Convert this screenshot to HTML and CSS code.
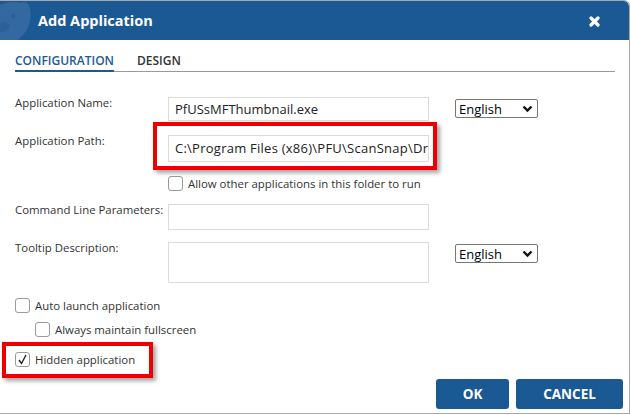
FILE: index.html
```html
<!DOCTYPE html>
<html lang="en">
<head>
    <meta charset="UTF-8">
    <title>Add Application</title>
    <link rel="stylesheet" href="styles.css">
</head>
<body>

    <div class="dialog">
        <!-- Title bar -->
        <div class="titlebar">
            <svg class="bear" width="34" height="39" viewBox="0 0 34 39">
                <path d="M0 4 C6 1 14 0 20 2 C24 0 28 1 29 5 C31 9 31 14 30 19 C29 26 26 31 22 35 L18 39 L0 39 Z" fill="#3369a0"/>
                <path d="M0 22 C3 20 7 21 9 24 C10 27 8 30 4 31 L0 31 Z" fill="#2a6199"/>
                <circle cx="13" cy="15" r="1.6" fill="#245d96"/>
            </svg>
            <div class="title">Add Application</div>
            <svg class="close" width="11" height="11" viewBox="0 0 11 11">
                <path d="M2 2 L9 9 M9 2 L2 9" stroke="#fff" stroke-width="3.2" stroke-linecap="round"/>
            </svg>
        </div>

        <!-- Tabs -->
        <div class="tabs">
            <div class="tab active">CONFIGURATION</div>
            <div class="tab">DESIGN</div>
        </div>

        <!-- Form -->
        <div class="form">
            <div class="row row-name">
                <div class="label">Application Name:</div>
                <div class="field">PfUSsMFThumbnail.exe</div>
                <div class="select">
                    <span>English</span>
                    <svg width="11" height="8" viewBox="0 0 11 8"><path d="M1.5 1.5 L5.5 5.5 L9.5 1.5" stroke="#111" stroke-width="2.4" fill="none"/></svg>
                </div>
            </div>

            <div class="row row-path">
                <div class="label">Application Path:</div>
                <div class="highlight highlight-path">
                    <div class="field field-path">C:\Program Files (x86)\PFU\ScanSnap\Dr</div>
                </div>
            </div>

            <label class="check check-allow">
                <span class="box"></span>
                Allow other applications in this folder to run
            </label>

            <div class="row row-cmd">
                <div class="label">Command Line Parameters:</div>
                <div class="field field-cmd"></div>
            </div>

            <div class="row row-tip">
                <div class="label">Tooltip Description:</div>
                <div class="field field-tip"></div>
                <div class="select">
                    <span>English</span>
                    <svg width="11" height="8" viewBox="0 0 11 8"><path d="M1.5 1.5 L5.5 5.5 L9.5 1.5" stroke="#111" stroke-width="2.4" fill="none"/></svg>
                </div>
            </div>

            <label class="check check-auto">
                <span class="box"></span>
                Auto launch application
            </label>

            <label class="check check-full">
                <span class="box"></span>
                Always maintain fullscreen
            </label>

            <div class="highlight highlight-hidden">
                <label class="check">
                    <span class="box">
                        <svg width="13" height="13" viewBox="0 0 13 13"><path d="M3 7 L5.5 10.5 L10 2" stroke="#222" stroke-width="1.4" fill="none"/></svg>
                    </span>
                    Hidden application
                </label>
            </div>
        </div>

        <!-- Buttons -->
        <div class="buttons">
            <button class="button ok">OK</button>
            <button class="button cancel">CANCEL</button>
        </div>
    </div>

</body>
</html>
```

FILE: styles.css
```css
body, html {
    margin: 0;
    padding: 0;
    background-color: #ffffff;
    font-family: "Open Sans", "Noto Sans", sans-serif;
    overflow: hidden;
}

.dialog {
    width: 630px;
    height: 414px;
    box-sizing: border-box;
    border-top: 1px solid #a9a9a9;
    border-right: 1px solid #a9a9a9;
    border-bottom: 1px solid #a9a9a9;
    border-top-right-radius: 6px;
    display: flex;
    flex-direction: column;
    overflow: hidden;
}

/* Title bar */
.titlebar {
    height: 39px;
    background-color: #1b5995;
    display: flex;
    align-items: center;
    border-top-right-radius: 5px;
}

.bear {
    flex: none;
}

.title {
    color: #ffffff;
    font-weight: bold;
    font-size: 14.5px;
    margin-left: 4px;
    flex: 1;
}

.close {
    margin-right: 29px;
    margin-top: 1px;
}

/* Tabs */
.tabs {
    display: flex;
    margin: 0 14px 0 15px;
    height: 31px;
    border-bottom: 1px solid #9a9a9a;
}

.tab {
    font-size: 12px;
    font-weight: 600;
    color: #333;
    padding-top: 12px;
    height: 18px;
    line-height: 18px;
    margin-right: 23px;
}

.tab.active {
    color: #1b5995;
    border-bottom: 2px solid #1b5995;
}

/* Form */
.form {
    padding-left: 15px;
    display: flex;
    flex-direction: column;
    align-items: flex-start;
}

.row {
    display: flex;
    align-items: flex-start;
}

.label {
    width: 153px;
    font-size: 11.4px;
    color: #333;
    line-height: 15px;
    margin-top: -2px;
}

.field {
    width: 261px;
    height: 24px;
    box-sizing: border-box;
    border: 1px solid #dcdcdc;
    font-size: 13px;
    color: #222;
    padding: 0 6px;
    line-height: 22px;
    white-space: nowrap;
    overflow: hidden;
}

.row-name {
    margin-top: 25px;
}

.row-path {
    margin-top: 14px;
}

.field-path {
    height: 27px;
    line-height: 25px;
    letter-spacing: 0.25px;
}

.row-cmd {
    margin-top: 13px;
}

.field-cmd {
    height: 26px;
}

.row-tip {
    margin-top: 12px;
}

.field-tip {
    height: 41px;
}

.select {
    width: 83px;
    height: 19px;
    box-sizing: border-box;
    border: 1px solid #767676;
    border-radius: 2px;
    margin-left: 26px;
    margin-top: 2px;
    display: flex;
    align-items: center;
    justify-content: space-between;
    padding: 0 4px 0 3px;
    font-size: 13px;
    color: #000;
}

/* Red annotation boxes */
.highlight {
    border: 4px solid #ee0000;
    box-shadow: 3px 3px 4px rgba(0, 0, 0, 0.35);
}

.highlight-path {
    margin: -13px -9px -8px -15px;
    padding: 9px 4px 4px 11px;
}

.highlight-hidden {
    margin: 5px 0 0 -13px;
    padding: 6px 14px 7px 9px;
}

/* Checkboxes */
.check {
    display: flex;
    align-items: center;
    font-size: 11.4px;
    color: #333;
    height: 15px;
}

.box {
    width: 15px;
    height: 15px;
    box-sizing: border-box;
    border: 1px solid #9a9a9a;
    border-radius: 3px;
    margin-right: 5px;
    display: flex;
    align-items: center;
    justify-content: center;
    flex: none;
}

.check-allow {
    margin-top: 14px;
    margin-left: 153px;
}

.check-auto {
    margin-top: 15px;
}

.check-full {
    margin-top: 9px;
    margin-left: 20px;
}

/* Buttons */
.buttons {
    margin-top: auto;
    display: flex;
    justify-content: flex-end;
    gap: 7px;
    padding: 0 6px 4px 0;
}

.button {
    height: 30px;
    background-color: #1b5995;
    color: #ffffff;
    border: none;
    border-radius: 3px;
    font-family: "Open Sans", sans-serif;
    font-weight: bold;
    font-size: 13.5px;
}

.ok {
    width: 73px;
}

.cancel {
    width: 107px;
}
```
